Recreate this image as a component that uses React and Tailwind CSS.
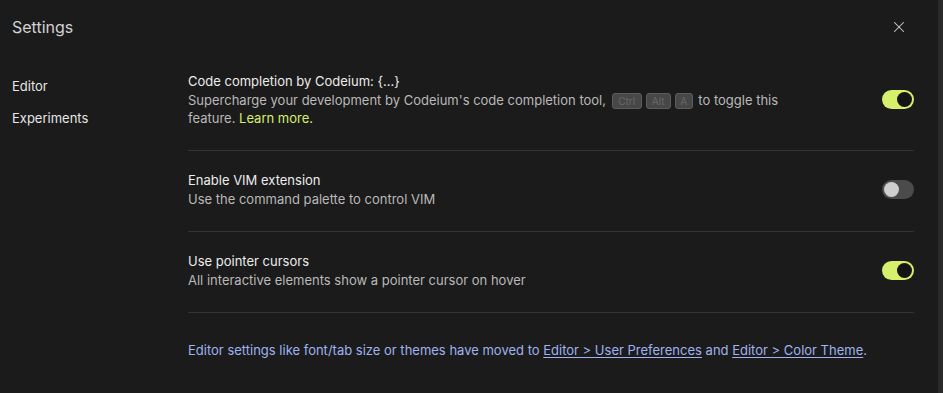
import { X } from "lucide-react";

const Toggle = ({ on }) => (
  <div
    className={
      "w-[32px] h-[19px] rounded-full flex items-center px-[2px] shrink-0 " +
      (on ? "bg-[#d6ef6c] justify-end" : "bg-[#4b4b4b] justify-start")
    }
  >
    <div className={"w-[15px] h-[15px] rounded-full " + (on ? "bg-[#141414]" : "bg-[#cfcfcf]")} />
  </div>
);

const Kbd = ({ children, w }) => (
  <span
    className={
      "inline-flex items-center justify-center h-[16px] align-middle -my-[2px] mx-[2px] rounded-[3px] border border-[#5c5c5c] bg-[#474747] text-[10px] text-[#676767] leading-none " +
      w
    }
  >
    {children}
  </span>
);

const Row = ({ title, on, children }) => (
  <div className="flex items-center justify-between pt-5 pb-[23px] border-b border-[#333333]">
    <div className="text-[13px] leading-[18px]">
      <div className="text-[#ececec] mb-[1px]">{title}</div>
      <div className="text-[#b9b9b9] max-w-[600px]">{children}</div>
    </div>
    <Toggle on={on} />
  </div>
);

export default function App() {
  return (
    <div className="h-screen w-full bg-[#1b1b1b] flex overflow-hidden" style={{ fontFamily: "Inter, 'Noto Sans', sans-serif" }}>
      <div className="flex-1 flex flex-col">
        {/* Header */}
        <div className="h-[52px] flex items-center justify-between pl-3 pr-[30px] pt-[2px]">
          <h1 className="text-[16px] text-[#d2d2d2]">Settings</h1>
          <X className="w-[18px] h-[18px] text-[#d0d0d0]" strokeWidth={1.4} />
        </div>

        <div className="flex flex-1">
          {/* Sidebar */}
          <div className="w-[188px] pl-3 pt-[25px] flex flex-col gap-[14px] text-[13px] leading-[18px] text-[#e6e6e6]">
            <div>Editor</div>
            <div>Experiments</div>
          </div>

          {/* Content */}
          <div className="flex-1 pr-[24px]">
            <Row title="Code completion by Codeium: {...}" on>
              Supercharge your development by Codeium's code completion tool,{" "}
              <Kbd w="w-[30px]">Ctrl</Kbd>
              <Kbd w="w-[25px]">Alt</Kbd>
              <Kbd w="w-[18px]">A</Kbd> to toggle this feature.{" "}
              <span className="text-[#d6ef6c]">Learn more.</span>
            </Row>
            <Row title="Enable VIM extension">Use the command palette to control VIM</Row>
            <Row title="Use pointer cursors" on>
              All interactive elements show a pointer cursor on hover
            </Row>
            <p className="pt-[28px] text-[13px] leading-[18px] text-[#9fb3f0]">
              Editor settings like font/tab size or themes have moved to{" "}
              <span className="underline underline-offset-2">Editor &gt; User Preferences</span> and{" "}
              <span className="underline underline-offset-2">Editor &gt; Color Theme</span>.
            </p>
          </div>
        </div>
      </div>
      <div className="w-[5px] h-full bg-[#2a2a2a]" />
    </div>
  );
}
